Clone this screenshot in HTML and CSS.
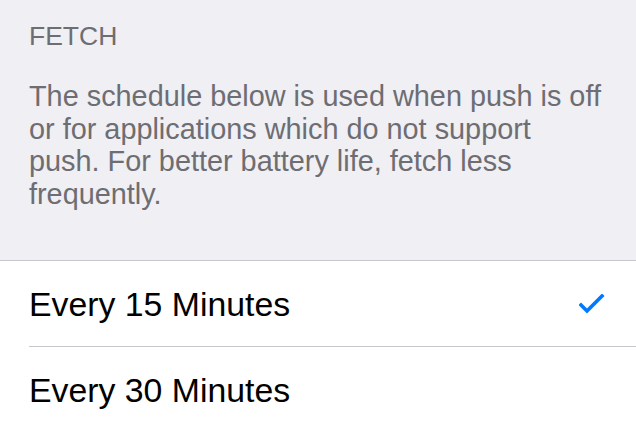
FILE: index.html
```html
<!DOCTYPE html>
<html lang="en">
<head>
	<meta charset="UTF-8">
	<title>Fetch</title>
	<link rel="stylesheet" href="styles.css">
</head>
<body>
	<div class="group-head">
		<div class="title">FETCH</div>
		<p class="note">The schedule below is used when push is off<br>or for applications which do not support<br>push. For better battery life, fetch less<br>frequently.</p>
	</div>
	<ul class="list">
		<li class="row">
			<span>Every 15 Minutes</span>
			<svg class="check" width="26" height="20" viewBox="0 0 26 20">
				<path d="M2 11 L8 17 L23 2" fill="none" stroke="#007aff" stroke-width="3.6" stroke-linecap="square" stroke-linejoin="miter"/>
			</svg>
		</li>
		<li class="row">
			<span>Every 30 Minutes</span>
		</li>
	</ul>
</body>
</html>
```
FILE: styles.css
```css
body, div, ul, li, p {
	margin: 0;
	padding: 0;
}
body {
	font-family: "Liberation Sans", Arial, sans-serif;
	background: #efeff4;
}
ul {
	list-style-type: none;
}
.group-head {
	padding: 21px 0 50px 29px;
	color: #6d6d72;
}
.group-head .title {
	font-size: 26.5px;
	line-height: 30px;
}
.group-head .note {
	margin-top: 29px;
	font-size: 28.85px;
	line-height: 32.5px;
	white-space: nowrap;
}
.list {
	background: #fff;
	border-top: 1px solid #c8c7cc;
	min-height: 180px;
}
.row {
	display: flex;
	align-items: center;
	justify-content: space-between;
	margin-left: 29px;
	padding-right: 31px;
	height: 86px;
	border-bottom: 1px solid #c8c7cc;
	box-sizing: border-box;
	font-size: 33.8px;
	line-height: 40px;
	color: #000;
}
.row:last-child {
	border-bottom: none;
}
.check {
	display: block;
}
```
